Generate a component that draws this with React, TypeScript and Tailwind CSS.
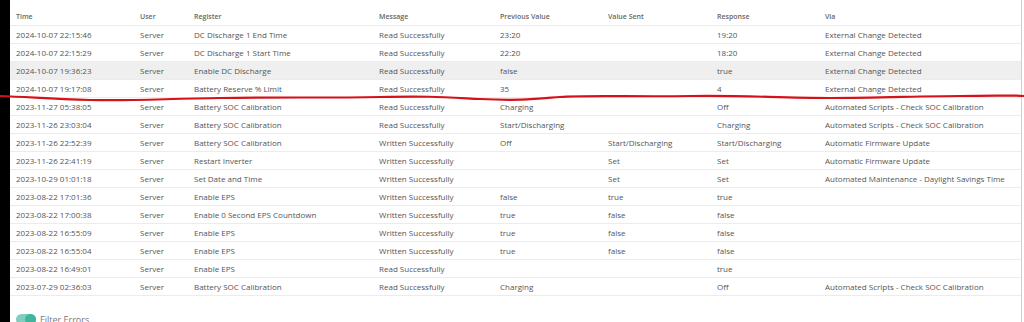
import React from 'react'

type Row = [string, string, string, string, string, string, string, string]

const rows: Row[] = [
  ['2024-10-07 22:15:46', 'Server', 'DC Discharge 1 End Time', 'Read Successfully', '23:20', '', '19:20', 'External Change Detected'],
  ['2024-10-07 22:15:29', 'Server', 'DC Discharge 1 Start Time', 'Read Successfully', '22:20', '', '18:20', 'External Change Detected'],
  ['2024-10-07 19:36:23', 'Server', 'Enable DC Discharge', 'Read Successfully', 'false', '', 'true', 'External Change Detected'],
  ['2024-10-07 19:17:08', 'Server', 'Battery Reserve % Limit', 'Read Successfully', '35', '', '4', 'External Change Detected'],
  ['2023-11-27 05:38:05', 'Server', 'Battery SOC Calibration', 'Read Successfully', 'Charging', '', 'Off', 'Automated Scripts - Check SOC Calibration'],
  ['2023-11-26 23:03:04', 'Server', 'Battery SOC Calibration', 'Read Successfully', 'Start/Discharging', '', 'Charging', 'Automated Scripts - Check SOC Calibration'],
  ['2023-11-26 22:52:39', 'Server', 'Battery SOC Calibration', 'Written Successfully', 'Off', 'Start/Discharging', 'Start/Discharging', 'Automatic Firmware Update'],
  ['2023-11-26 22:41:19', 'Server', 'Restart Inverter', 'Written Successfully', '', 'Set', 'Set', 'Automatic Firmware Update'],
  ['2023-10-29 01:01:18', 'Server', 'Set Date and Time', 'Written Successfully', '', 'Set', 'Set', 'Automated Maintenance - Daylight Savings Time'],
  ['2023-08-22 17:01:36', 'Server', 'Enable EPS', 'Written Successfully', 'false', 'true', 'true', ''],
  ['2023-08-22 17:00:38', 'Server', 'Enable 0 Second EPS Countdown', 'Written Successfully', 'true', 'false', 'false', ''],
  ['2023-08-22 16:55:09', 'Server', 'Enable EPS', 'Written Successfully', 'true', 'false', 'false', ''],
  ['2023-08-22 16:55:04', 'Server', 'Enable EPS', 'Written Successfully', 'true', 'false', 'false', ''],
  ['2023-08-22 16:49:01', 'Server', 'Enable EPS', 'Read Successfully', '', '', 'true', ''],
  ['2023-07-29 02:36:03', 'Server', 'Battery SOC Calibration', 'Read Successfully', 'Charging', '', 'Off', 'Automated Scripts - Check SOC Calibration'],
]

const headers = ['Time', 'User', 'Register', 'Message', 'Previous Value', 'Value Sent', 'Response', 'Via']

const cols = 'grid grid-cols-[124px_54px_185px_121px_108px_109px_108px_1fr]'

export default function App() {
  return (
    <div className="relative flex w-[1024px] h-[322px] overflow-hidden bg-white font-['Open_Sans',sans-serif] text-[#555]">
      {/* dark strip on the left edge */}
      <div className="w-[10px] shrink-0 bg-black" />

      <div className="flex-1 flex flex-col pt-[9px] border-r border-[#cfcfcf] mr-[2px]">
        {/* header */}
        <div className={`${cols} shrink-0 h-[17px] items-center border-b border-[#ececec] text-[7px] font-semibold text-[#666]`}>
          {headers.map((h) => (
            <div key={h} className="pl-[6px] truncate">{h}</div>
          ))}
        </div>

        {/* rows */}
        {rows.map((r, i) => (
          <div
            key={r[0]}
            className={`${cols} shrink-0 h-[18px] items-center border-b border-[#ececec] text-[8px] ${i === 2 ? 'bg-[#efefef]' : ''}`}
          >
            {r.map((c, j) => (
              <div key={j} className="pl-[6px] whitespace-nowrap">{c}</div>
            ))}
          </div>
        ))}

        {/* filter toggle */}
        <div className="shrink-0 flex items-center gap-[4px] pl-[6px] mt-[17px]">
          <div className="relative w-[20px] h-[11px] rounded-full bg-[#7fcfbd]">
            <div className="absolute right-0 top-0 w-[11px] h-[11px] rounded-full bg-[#3fb59a]" />
          </div>
          <span className="text-[9px] text-[#777]">Filter Errors</span>
        </div>
      </div>

      {/* hand-drawn red underline */}
      <svg className="absolute left-0 top-0 pointer-events-none" width="1024" height="322">
        <path
          d="M0 96 C 30 97, 50 99, 90 100 S 160 99, 220 98 S 330 98, 380 97 S 440 97, 480 99 S 535 99, 560 97 S 640 97, 690 96 S 780 98, 830 98 S 920 96, 960 96 S 1010 95, 1024 96"
          fill="none"
          stroke="#d4121a"
          strokeWidth="2.2"
          strokeLinecap="round"
        />
      </svg>
    </div>
  )
}
